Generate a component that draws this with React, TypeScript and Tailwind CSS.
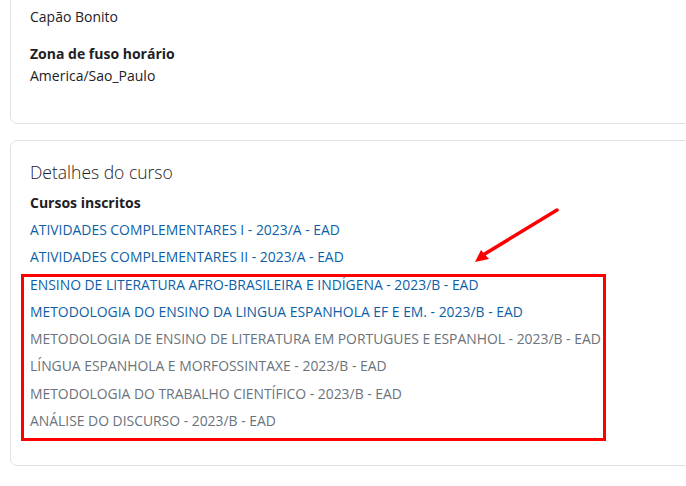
import React from "react";

const courses: { name: string; dim: boolean }[] = [
  { name: "ATIVIDADES COMPLEMENTARES I - 2023/A - EAD", dim: false },
  { name: "ATIVIDADES COMPLEMENTARES II - 2023/A - EAD", dim: false },
  { name: "ENSINO DE LITERATURA AFRO-BRASILEIRA E INDÍGENA - 2023/B - EAD", dim: false },
  { name: "METODOLOGIA DO ENSINO DA LINGUA ESPANHOLA EF E EM. - 2023/B - EAD", dim: false },
  { name: "METODOLOGIA DE ENSINO DE LITERATURA EM PORTUGUES E ESPANHOL - 2023/B - EAD", dim: true },
  { name: "LÍNGUA ESPANHOLA E MORFOSSINTAXE - 2023/B - EAD", dim: true },
  { name: "METODOLOGIA DO TRABALHO CIENTÍFICO - 2023/B - EAD", dim: true },
  { name: "ANÁLISE DO DISCURSO - 2023/B - EAD", dim: true },
];

export default function App() {
  return (
    <div
      className="relative w-[686px] h-[486px] overflow-hidden bg-white text-[#1d2125]"
      style={{ fontFamily: '"Open Sans", "Noto Sans", sans-serif' }}
    >
      <div className="flex flex-col gap-[16px] pl-[10px] mt-[-41px]">
        {/* Card 1 */}
        <div className="w-[720px] border border-[#dee2e6] rounded-[7px] pl-[19px] pt-[24px] pb-[36px]">
          <div className="text-[14px] leading-[22px] font-bold mt-[-3px] mb-[3px]">Cidade/Município</div>
          <div className="text-[14px] leading-[22px]">Capão Bonito</div>
          <div className="text-[14px] leading-[22px] font-bold mt-[15px]">Zona de fuso horário</div>
          <div className="text-[14px] leading-[22px]">America/Sao_Paulo</div>
        </div>
        {/* Card 2 */}
        <div className="w-[720px] border border-[#dee2e6] rounded-[7px] pl-[19px] pt-[17px] pb-[31px]">
          <h3 className="text-[17.5px] leading-[28px] font-light">Detalhes do curso</h3>
          <div className="text-[14px] leading-[22px] font-bold mt-[6px]">Cursos inscritos</div>
          <ul className="mt-[2px]">
            {courses.map((c) => (
              <li key={c.name} className="text-[13.9px] leading-[27.3px]">
                <a className={c.dim ? "text-[#6a737b]" : "text-[#0d5fa8]"}>{c.name}</a>
              </li>
            ))}
          </ul>
        </div>
      </div>

      {/* Annotation box */}
      <div className="absolute left-[21px] top-[274px] w-[585px] h-[167px] border-[3px] border-[#ff0000]" />
      {/* Annotation arrow */}
      <svg className="absolute left-0 top-0" width="686" height="486" viewBox="0 0 686 486">
        <line x1="557" y1="210" x2="483" y2="255" stroke="#ff0000" strokeWidth="3.5" strokeLinecap="round" />
        <polygon points="475,262 481,250 489,259" fill="#ff0000" />
      </svg>
    </div>
  );
}
